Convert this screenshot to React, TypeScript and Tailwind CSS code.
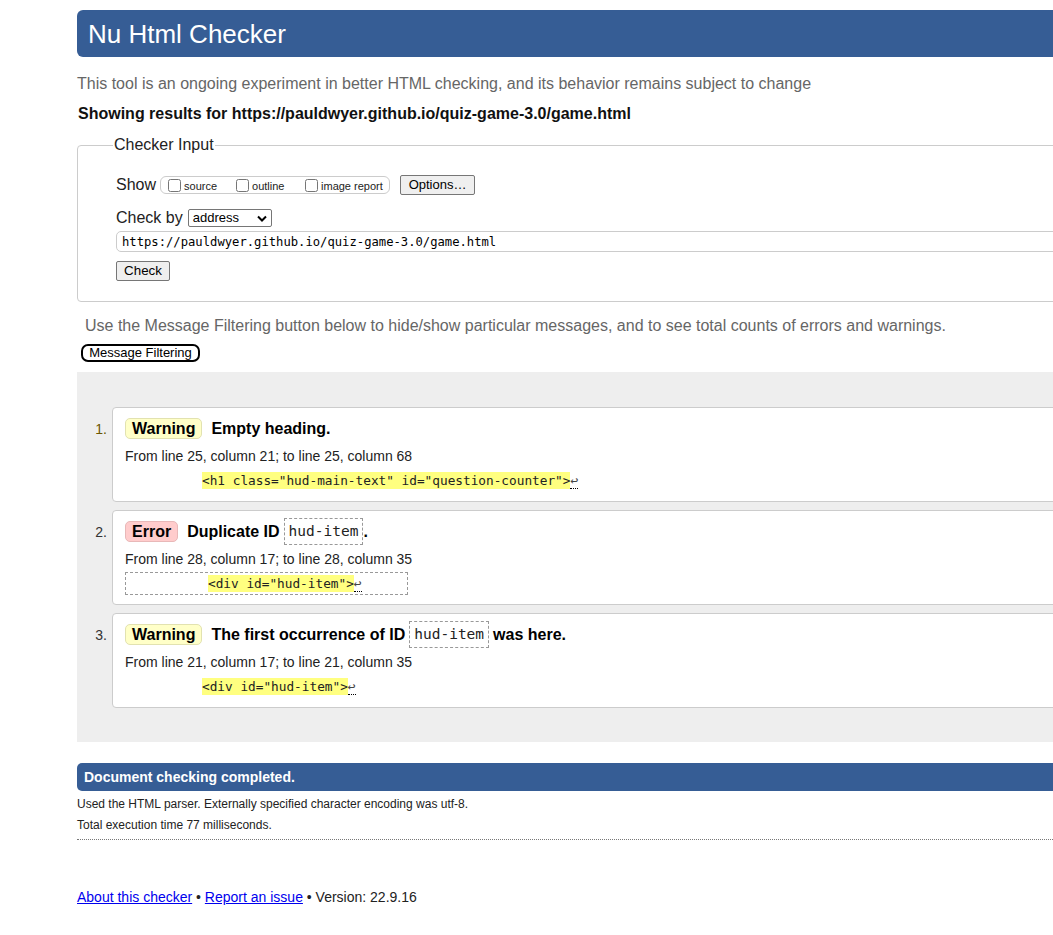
import React from "react"

const mono = "font-['DejaVu_Sans_Mono',monospace]"

function Badge({ kind }: { kind: "Warning" | "Error" }) {
  const cls =
    kind === "Warning"
      ? "bg-[#ffffc8] border-[#e2e2b0]"
      : "bg-[#ffcccc] border-[#e8b8b8]"
  return (
    <span className={`inline-flex h-[21px] items-center rounded-[5px] border px-[6px] text-[16px] font-bold text-black ${cls}`}>
      {kind}
    </span>
  )
}

function InlineCode({ children }: { children: React.ReactNode }) {
  return (
    <span className={`inline-flex h-[27px] items-center border border-dashed border-[#999] px-[4px] text-[14.5px] font-normal text-[#222] ${mono}`}>
      {children}
    </span>
  )
}

function Extract({ code, boxed }: { code: string; boxed?: boolean }) {
  const inner = (
    <span className={`flex items-center text-[12.75px] ${mono}`}>
      <span className="bg-[#ffff80] leading-[17px] text-[#222] whitespace-pre">{code}</span>
      <span className="border-b border-dotted border-black text-[13px] leading-[15px] text-[#444]">↩</span>
    </span>
  )
  if (boxed) {
    return (
      <div className="mt-[4px] flex h-[23px] w-[283px] items-center border border-dashed border-[#999] pl-[82px]">
        {inner}
      </div>
    )
  }
  return <div className="mt-[6px] flex h-[19px] items-center pl-[77px]">{inner}</div>
}

function Message({
  n,
  kind,
  children,
  from,
  code,
  boxed,
  numColor,
}: {
  n: number
  kind: "Warning" | "Error"
  children: React.ReactNode
  from: string
  code: string
  boxed?: boolean
  numColor: string
}) {
  return (
    <li className="flex">
      <span className={`w-[35px] shrink-0 pr-[5px] pt-[14px] text-right text-[14px] leading-[16px] ${numColor}`}>{n}.</span>
      <div className="h-[95px] flex-1 rounded-[4px] border border-[#cccccc] bg-white px-[12px] pt-[10px]">
        <div className="flex h-[21px] items-center gap-[9px] text-[16px] font-bold text-black">
          <Badge kind={kind} />
          <span className="flex h-[21px] items-center gap-[4px]">{children}</span>
        </div>
        <div className="mt-[8px] text-[14px] leading-[18px] text-[#222]">{from}</div>
        <Extract code={code} boxed={boxed} />
      </div>
    </li>
  )
}

export default function App() {
  return (
    <div className="h-[935px] w-[1053px] overflow-hidden bg-white font-['Liberation_Sans',Arial,sans-serif] text-[#222]">
      <div className="ml-[77px] w-[1100px] pt-[10px]">
        <header className="flex h-[47px] items-center rounded-[6px] bg-[#365d95] pl-[11px]">
          <h1 className="text-[26px] leading-[30px] text-white">Nu Html Checker</h1>
        </header>

        <p className="mt-[18px] text-[16px] leading-[18px] text-[#666]">
          This tool is an ongoing experiment in better HTML checking, and its behavior remains subject to change
        </p>
        <p className="mt-[12px] pl-[1px] text-[16px] font-bold leading-[18px] text-[#111]">
          Showing results for https://pauldwyer.github.io/quiz-game-3.0/game.html
        </p>

        <fieldset className="mt-[13px] h-[166px] rounded-[4px] border border-[#cccccc] pl-[38px]">
          <legend className="-ml-[3px] px-[1px] text-[16px] leading-[18px] text-[#222]">Checker Input</legend>

          <div className="mt-[21px] flex h-[20px] items-center">
            <span className="text-[16px] leading-[18px]">Show</span>
            <div className="ml-[4px] flex h-[18px] w-[230px] items-center rounded-[6px] border border-[#cccccc] pl-[7px] text-[11px]">
              <input type="checkbox" className="m-0 h-[13px] w-[13px]" />
              <span className="ml-[3px] w-[52px] pt-[2px]">source</span>
              <input type="checkbox" className="m-0 h-[13px] w-[13px]" />
              <span className="ml-[3px] w-[53px] pt-[2px]">outline</span>
              <input type="checkbox" className="m-0 h-[13px] w-[13px]" />
              <span className="ml-[3px] pt-[2px]">image report</span>
            </div>
            <button className="ml-[10px] flex h-[20px] w-[75px] items-center justify-center rounded-[2px] border border-[#767676] bg-[#efefef] text-[13px] text-black">
              Options…
            </button>
          </div>

          <div className="mt-[14px] flex h-[18px] items-center">
            <span className="text-[16px] leading-[18px]">Check by</span>
            <div className="ml-[5px] flex h-[18px] w-[84px] items-center justify-between rounded-[2px] border border-[#767676] px-[4px] text-[13px] text-black">
              <span>address</span>
              <svg width="10" height="7" viewBox="0 0 10 7">
                <path d="M1 1.5 L5 5.5 L9 1.5" fill="none" stroke="#000" strokeWidth="2" />
              </svg>
            </div>
          </div>

          <div className={`mt-[4px] flex h-[21px] items-center rounded-[5px] border border-[#cccccc] pl-[5px] pt-[1px] text-[12.2px] text-black ${mono}`}>
            https://pauldwyer.github.io/quiz-game-3.0/game.html
          </div>

          <button className="mt-[9px] flex h-[20px] w-[54px] items-center justify-center rounded-[2px] border border-[#767676] bg-[#efefef] text-[13.33px] text-black">
            Check
          </button>
        </fieldset>

        <p className="mt-[15px] pl-[8px] text-[16px] leading-[18px] text-[#666]">
          Use the Message Filtering button below to hide/show particular messages, and to see total counts of errors and warnings.
        </p>
        <button className="ml-[4px] mt-[9px] flex h-[18px] w-[119px] items-center justify-center rounded-[7px] border-2 border-black text-[13px] text-black">
          Message Filtering
        </button>

        <section className="mt-[10px] h-[370px] bg-[#eeeeee] pt-[35px]">
          <ol className="flex flex-col gap-[8px]">
            <Message
              n={1}
              kind="Warning"
              from="From line 25, column 21; to line 25, column 68"
              code={'<h1 class="hud-main-text" id="question-counter">'}
              numColor="text-[#6b5600]"
            >
              Empty heading.
            </Message>
            <Message
              n={2}
              kind="Error"
              from="From line 28, column 17; to line 28, column 35"
              code={'<div id="hud-item">'}
              boxed
              numColor="text-[#333]"
            >
              <span>Duplicate ID</span>
              <InlineCode>hud-item</InlineCode>
              <span className="-ml-[4px]">.</span>
            </Message>
            <Message
              n={3}
              kind="Warning"
              from="From line 21, column 17; to line 21, column 35"
              code={'<div id="hud-item">'}
              numColor="text-[#333]"
            >
              <span>The first occurrence of ID</span>
              <InlineCode>hud-item</InlineCode>
              <span>was here.</span>
            </Message>
          </ol>
        </section>

        <div className="mt-[21px] flex h-[28px] items-center rounded-[5px] bg-[#365d95] pl-[7px] text-[14px] font-bold text-white">
          Document checking completed.
        </div>
        <div className="border-b border-dotted border-[#777] pb-[7px] text-[12px] leading-[14px] text-[#222]">
          <p className="mt-[6px]">Used the HTML parser. Externally specified character encoding was utf-8.</p>
          <p className="mt-[7px]">Total execution time 77 milliseconds.</p>
        </div>

        <p className="mt-[49px] text-[14px] leading-[16px] text-[#222]">
          <a href="#" className="text-[#0000ee] underline">About this checker</a>
          {" • "}
          <a href="#" className="text-[#0000ee] underline">Report an issue</a>
          {" • Version: 22.9.16"}
        </p>
      </div>
    </div>
  )
}
